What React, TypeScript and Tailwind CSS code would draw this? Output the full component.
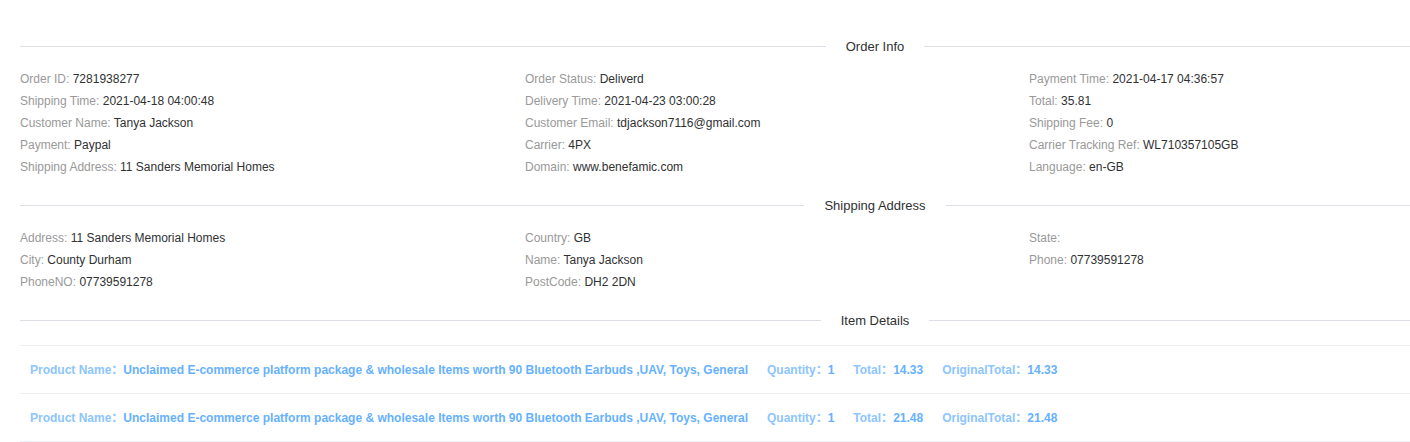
const orderInfo = [
  ['Order ID', '7281938277'],
  ['Order Status', 'Deliverd'],
  ['Payment Time', '2021-04-17 04:36:57'],
  ['Shipping Time', '2021-04-18 04:00:48'],
  ['Delivery Time', '2021-04-23 03:00:28'],
  ['Total', '35.81'],
  ['Customer Name', 'Tanya Jackson'],
  ['Customer Email', 'tdjackson7116@gmail.com'],
  ['Shipping Fee', '0'],
  ['Payment', 'Paypal'],
  ['Carrier', '4PX'],
  ['Carrier Tracking Ref', 'WL710357105GB'],
  ['Shipping Address', '11 Sanders Memorial Homes'],
  ['Domain', 'www.benefamic.com'],
  ['Language', 'en-GB'],
]

const shipping = [
  ['Address', '11 Sanders Memorial Homes'],
  ['Country', 'GB'],
  ['State', ''],
  ['City', 'County Durham'],
  ['Name', 'Tanya Jackson'],
  ['Phone', '07739591278'],
  ['PhoneNO', '07739591278'],
  ['PostCode', 'DH2 2DN'],
]

const items = [
  { total: '14.33', original: '14.33' },
  { total: '21.48', original: '21.48' },
]

const productName =
  'Unclaimed E-commerce platform package & wholesale Items worth 90 Bluetooth Earbuds ,UAV, Toys, General'

function Divider({ title, className }: { title: string; className?: string }) {
  return (
    <div className={`flex h-[21px] w-[1710px] items-center ${className ?? ''}`}>
      <div className="h-px flex-1 bg-[#dcdfe6]" />
      <span className="px-5 text-[13px] text-[#303133]">{title}</span>
      <div className="h-px flex-1 bg-[#dcdfe6]" />
    </div>
  )
}

function InfoGrid({ rows }: { rows: string[][] }) {
  return (
    <div className="mt-[11px] grid grid-cols-[505px_504px_1fr] text-[12px] leading-[22px]">
      {rows.map(([label, value]) => (
        <div key={label} className="whitespace-nowrap">
          <span className="text-[#999999]">{label}: </span>
          <span className="text-[#303133]">{value}</span>
        </div>
      ))}
    </div>
  )
}

export default function App() {
  return (
    <div className="h-[442px] w-full overflow-hidden bg-white" style={{ fontFamily: '"Liberation Sans", Arial, "Noto Sans CJK SC", sans-serif' }}>
      <div className="w-[1730px] pl-5 pt-[36px]">
        <Divider title="Order Info" />
        <InfoGrid rows={orderInfo} />

        <Divider title="Shipping Address" className="mt-[17px]" />
        <InfoGrid rows={shipping} />

        <Divider title="Item Details" className="mt-[17px]" />

        {/* Item rows */}
        <div className="mt-[14px] w-[1710px] border-t border-[#ebeef5]">
          {items.map((item, i) => (
            <div
              key={i}
              className="flex h-[48px] items-center gap-[19px] border-b border-[#ebeef5] pl-[10px] text-[12px] font-bold whitespace-nowrap"
            >
              <span>
                <span className="text-[#8cc5ff]">Product Name：</span>
                <span className="text-[#66b1ff]">{productName}</span>
              </span>
              <span>
                <span className="text-[#8cc5ff]">Quantity：</span>
                <span className="text-[#66b1ff]">1</span>
              </span>
              <span>
                <span className="text-[#8cc5ff]">Total：</span>
                <span className="text-[#66b1ff]">{item.total}</span>
              </span>
              <span>
                <span className="text-[#8cc5ff]">OriginalTotal：</span>
                <span className="text-[#66b1ff]">{item.original}</span>
              </span>
            </div>
          ))}
        </div>
      </div>
    </div>
  )
}
